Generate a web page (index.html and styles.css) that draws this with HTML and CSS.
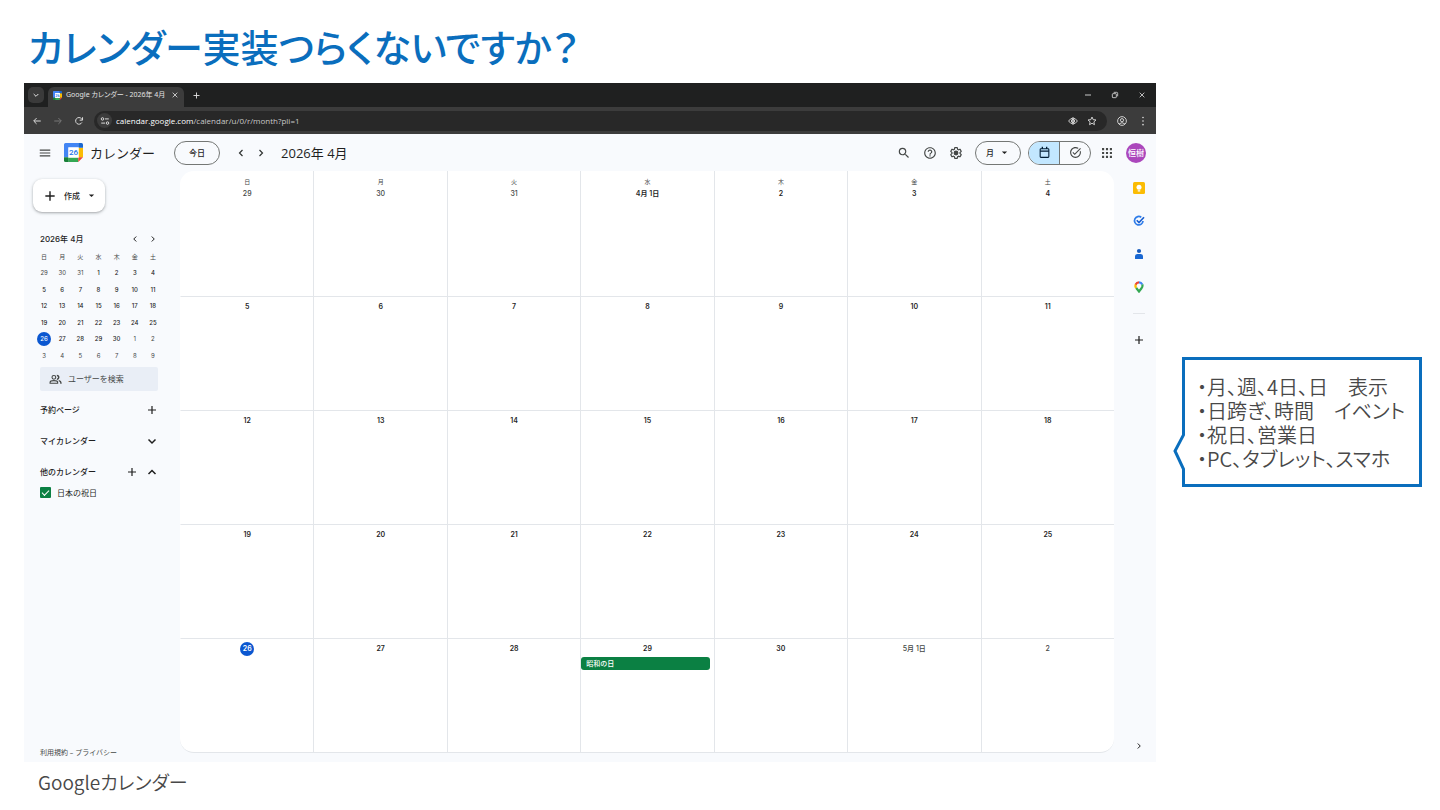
FILE: index.html
```html
<!DOCTYPE html>
<html lang="ja">
<head>
<meta charset="utf-8">
<title>カレンダー実装つらくないですか？</title>
<link rel="stylesheet" href="styles.css">
</head>
<body>
<svg class="defs" aria-hidden="true">
  <symbol id="plus" viewBox="0 0 24 24"><path d="M12 4v16M4 12h16" fill="none" stroke="currentColor" stroke-width="2.4"/></symbol>
  <symbol id="left" viewBox="0 0 24 24"><path d="M15 6l-6 6 6 6" fill="none" stroke="currentColor" stroke-width="2.4"/></symbol>
  <symbol id="right" viewBox="0 0 24 24"><path d="M9 6l6 6-6 6" fill="none" stroke="currentColor" stroke-width="2.4"/></symbol>
  <symbol id="down" viewBox="0 0 24 24"><path d="M5 9l7 7 7-7" fill="none" stroke="currentColor" stroke-width="3"/></symbol>
  <symbol id="up" viewBox="0 0 24 24"><path d="M5 16l7-7 7 7" fill="none" stroke="currentColor" stroke-width="3"/></symbol>
  <symbol id="caret" viewBox="0 0 24 24"><path d="M5 9l7 7 7-7z" fill="currentColor"/></symbol>
  <symbol id="close" viewBox="0 0 24 24"><path d="M5 5l14 14M19 5L5 19" fill="none" stroke="currentColor" stroke-width="2.4"/></symbol>
  <symbol id="gcal" viewBox="0 0 20 20">
    <path d="M1.600 0H15v5H5v10H0V1.600A1.600 1.600 0 0 1 1.600 0z" fill="#4285f4"/>
    <path d="M0 15h5v5H1.600A1.600 1.600 0 0 1 0 18.400z" fill="#188038"/>
    <path d="M5 15h10v5H5z" fill="#34a853"/>
    <path d="M15 5h5v10h-5z" fill="#fbbc04"/>
    <path d="M15 0h3.400A1.600 1.600 0 0 1 20 1.600V5h-5z" fill="#1967d2"/>
    <path d="M15 15h5l-5 5z" fill="#ea4335"/>
    <path d="M4.500 4.500h11v11h-11z" fill="#fff"/>
  </symbol>
</svg>

<main class="slide">
  <h1 class="slide-title">カレンダー実装つらくないですか？</h1>
  <div class="slide-body">
    <figure class="shot">
      <div class="window">
        <div class="tabstrip">
          <button class="tab-search" aria-label="タブを検索"><svg class="i8"><use href="#down"/></svg></button>
          <div class="tab">
            <span class="favicon"><svg viewBox="0 0 20 20"><use href="#gcal"/></svg><span class="fav-day">26</span></span>
            <span class="tab-name">Google カレンダー - 2026年 4月</span>
            <button class="plain" aria-label="タブを閉じる"><svg class="i8"><use href="#close"/></svg></button>
          </div>
          <button class="plain tab-new" aria-label="新しいタブ"><svg class="i9"><use href="#plus"/></svg></button>
          <div class="win-buttons">
            <button class="plain" aria-label="最小化"><svg class="i8" viewBox="0 0 24 24"><path d="M3 12h18" stroke="currentColor" stroke-width="2.6"/></svg></button>
            <button class="plain" aria-label="元に戻す"><svg class="i8" viewBox="0 0 24 24" fill="none" stroke="currentColor" stroke-width="2.4"><rect x="4" y="8" width="12" height="12" rx="2"/><path d="M8 4h9q3 0 3 3v9"/></svg></button>
            <button class="plain" aria-label="閉じる"><svg class="i8"><use href="#close"/></svg></button>
          </div>
        </div>
        <div class="toolbar">
          <button class="plain" aria-label="戻る"><svg class="i10" viewBox="0 0 24 24" fill="none" stroke="currentColor" stroke-width="2.4"><path d="M21 12H5M11 5l-7 7 7 7"/></svg></button>
          <button class="plain dim" aria-label="進む"><svg class="i10" viewBox="0 0 24 24" fill="none" stroke="currentColor" stroke-width="2.2"><path d="M3 12h16M13 5l7 7-7 7"/></svg></button>
          <button class="plain" aria-label="再読み込み"><svg class="i10" viewBox="0 0 24 24" fill="none" stroke="currentColor" stroke-width="2.4"><path d="M19 15.500A8 8 0 1 1 18 6.500L20 9"/><path d="M20.500 3v7h-7"/></svg></button>
          <div class="omnibox">
            <button class="plain site-info" aria-label="サイト情報"><svg class="i10" viewBox="0 0 24 24" fill="none" stroke="currentColor" stroke-width="2.4"><circle cx="6" cy="7" r="3"/><path d="M12 7h9M3 17h9"/><circle cx="18" cy="17" r="3"/></svg></button>
            <label class="url"><span class="url-host">calendar.google.com</span><input class="url-path" aria-label="アドレス" value="/calendar/u/0/r/month?pli=1"></label>
            <button class="plain" aria-label="表示"><svg class="i10" viewBox="0 0 24 24" fill="none" stroke="currentColor" stroke-width="2.2"><path d="M1.500 12Q6 5 12 5t10.500 7Q18 19 12 19T1.500 12z"/><circle cx="12" cy="12" r="4"/><path d="M12 3v18M8 12h8"/></svg></button>
            <button class="plain" aria-label="ブックマーク"><svg class="i10" viewBox="0 0 24 24" fill="none" stroke="currentColor" stroke-width="2.2"><path d="M12 2.500l2.800 6.300 6.800.7-5.100 4.600 1.400 6.700-5.900-3.400-5.900 3.400 1.400-6.700-5.100-4.600 6.800-.7z"/></svg></button>
          </div>
          <button class="plain" aria-label="プロフィール"><svg class="i10" viewBox="0 0 24 24" fill="none" stroke="currentColor" stroke-width="2.2"><circle cx="12" cy="12" r="10.500"/><circle cx="12" cy="10" r="3.800"/><path d="M5 19q7-6 14 0"/></svg></button>
          <button class="plain" aria-label="メニュー"><svg class="i10" viewBox="0 0 24 24" fill="currentColor"><circle cx="12" cy="3.500" r="2"/><circle cx="12" cy="12" r="2"/><circle cx="12" cy="20.500" r="2"/></svg></button>
        </div>

        <div class="app">
          <header class="app-head">
            <button class="plain" aria-label="メインメニュー"><svg class="i15" viewBox="0 0 24 24" fill="#444746"><path d="M3 18h18v-2H3v2zm0-5h18v-2H3v2zm0-7v2h18V6H3z"/></svg></button>
            <span class="logo"><svg viewBox="0 0 20 20"><use href="#gcal"/></svg><span class="logo-day">26</span></span>
            <span class="brand">カレンダー</span>
            <button class="pill today">今日</button>
            <div class="pager">
              <button class="plain" aria-label="前の月"><svg class="i12"><use href="#left"/></svg></button>
              <button class="plain" aria-label="次の月"><svg class="i12"><use href="#right"/></svg></button>
            </div>
            <h2 class="month">2026年 4月</h2>
            <div class="tools">
              <button class="plain" aria-label="検索"><svg class="i15" viewBox="0 0 24 24" fill="currentColor"><path d="M15.500 14h-.79l-.28-.27A6.471 6.471 0 0 0 16 9.500 6.500 6.500 0 1 0 9.500 16c1.610 0 3.090-.59 4.230-1.570l.27.28v.79l5 4.990L20.490 19l-4.990-5zm-6 0C7.010 14 5 11.990 5 9.500S7.010 5 9.500 5 14 7.010 14 9.500 11.990 14 9.500 14z"/></svg></button>
              <button class="plain" aria-label="ヘルプ"><svg class="i15" viewBox="0 0 24 24" fill="currentColor"><path d="M11 18h2v-2h-2v2zm1-16C6.480 2 2 6.480 2 12s4.480 10 10 10 10-4.480 10-10S17.520 2 12 2zm0 18c-4.410 0-8-3.590-8-8s3.590-8 8-8 8 3.590 8 8-3.590 8-8 8zm0-14c-2.210 0-4 1.790-4 4h2c0-1.100.9-2 2-2s2 .9 2 2c0 2-3 1.750-3 5h2c0-2.250 3-2.500 3-5 0-2.210-1.790-4-4-4z"/></svg></button>
              <button class="plain" aria-label="設定"><svg class="i15" viewBox="0 0 24 24" fill="currentColor"><path d="M13.850 22.250h-3.700c-.74 0-1.360-.54-1.450-1.270l-.27-1.890c-.27-.14-.53-.29-.79-.46l-1.800.72c-.7.26-1.470-.03-1.810-.65L2.200 15.530c-.35-.66-.2-1.440.36-1.880l1.530-1.190c-.01-.15-.02-.3-.02-.46 0-.15.01-.31.02-.46l-1.520-1.190c-.59-.45-.74-1.260-.37-1.880l1.850-3.190c.34-.62 1.110-.9 1.790-.63l1.810.73c.26-.17.52-.32.78-.46l.27-1.910c.09-.7.71-1.250 1.440-1.250h3.700c.74 0 1.360.54 1.450 1.270l.27 1.890c.27.14.53.29.79.46l1.800-.72c.71-.26 1.480.03 1.820.65l1.840 3.180c.36.66.2 1.440-.36 1.880l-1.520 1.190c.01.15.02.3.02.46s-.01.31-.02.46l1.520 1.190c.56.45.72 1.230.37 1.860l-1.860 3.220c-.34.62-1.110.9-1.800.63l-1.800-.72c-.26.17-.52.32-.78.46l-.27 1.910c-.1.68-.72 1.220-1.460 1.220zm-3.230-2h2.760l.37-2.550.53-.22c.44-.18.88-.44 1.340-.78l.45-.34 2.380.96 1.380-2.400-2.030-1.580.07-.56c.03-.26.06-.51.06-.78s-.03-.53-.06-.78l-.07-.56 2.030-1.580-1.390-2.400-2.390.96-.45-.35c-.42-.32-.87-.58-1.330-.77l-.52-.22-.37-2.550h-2.760l-.37 2.550-.53.21c-.44.19-.88.44-1.340.79l-.45.33-2.380-.95-1.390 2.390 2.030 1.580-.07.56a7 7 0 0 0-.06.79c0 .26.02.53.06.78l.07.56-2.030 1.580 1.380 2.400 2.390-.96.45.35c.43.33.86.58 1.330.77l.53.22.38 2.550z"/><circle cx="12" cy="12" r="4.200"/></svg></button>
            </div>
            <div class="pill view">
              <select class="view-select" aria-label="表示形式"><option>月</option></select>
              <svg class="i9"><use href="#caret"/></svg>
            </div>
            <div class="pill toggle">
              <button class="toggle-item on" aria-label="カレンダー"><svg class="i13" viewBox="0 0 24 24" fill="none" stroke="currentColor" stroke-width="2"><rect x="4" y="5" width="16" height="16" rx="1.500"/><path d="M8 1.500v4M16 1.500v4M4 9.500h16" stroke-width="2.400"/></svg></button>
              <button class="toggle-item" aria-label="ToDo リスト"><svg class="i13" viewBox="0 0 24 24" fill="currentColor"><path d="M22 5.180L10.590 16.600l-4.240-4.240 1.410-1.410 2.830 2.830 10-10L22 5.180zm-2.210 5.040c.13.57.21 1.170.21 1.780 0 4.420-3.580 8-8 8s-8-3.580-8-8 3.580-8 8-8c1.580 0 3.040.46 4.280 1.250l1.440-1.440A9.900 9.900 0 0 0 12 2C6.480 2 2 6.480 2 12s4.480 10 10 10 10-4.480 10-10c0-1.190-.22-2.330-.6-3.390l-1.610 1.610z"/></svg></button>
            </div>
            <button class="plain apps" aria-label="Google アプリ"><svg class="i15" viewBox="0 0 24 24" fill="#444746"><path d="M3.500 3.500h3.600v3.600H3.500zM10.200 3.500h3.600v3.600h-3.600zM16.900 3.500h3.600v3.600h-3.600zM3.500 10.200h3.600v3.600H3.500zM10.200 10.200h3.600v3.600h-3.600zM16.900 10.200h3.600v3.600h-3.600zM3.500 16.900h3.600v3.600H3.500zM10.200 16.900h3.600v3.600h-3.600zM16.900 16.900h3.600v3.600h-3.600z"/></svg></button>
            <button class="avatar">恒樹</button>
          </header>

          <div class="app-body">
            <aside class="side">
              <button class="create"><svg class="i15"><use href="#plus"/></svg><span>作成</span><svg class="i9"><use href="#caret"/></svg></button>
              <div class="mini-head">
                <span>2026年 4月</span>
                <button class="plain" aria-label="前の月"><svg class="i10"><use href="#left"/></svg></button>
                <button class="plain" aria-label="次の月"><svg class="i10"><use href="#right"/></svg></button>
              </div>
              <table class="mini">
                <thead><tr><th>日</th><th>月</th><th>火</th><th>水</th><th>木</th><th>金</th><th>土</th></tr></thead>
                <tbody>
                <tr><td class="out">29</td><td class="out">30</td><td class="out">31</td><td>1</td><td>2</td><td>3</td><td>4</td></tr>
                <tr><td>5</td><td>6</td><td>7</td><td>8</td><td>9</td><td>10</td><td>11</td></tr>
                <tr><td>12</td><td>13</td><td>14</td><td>15</td><td>16</td><td>17</td><td>18</td></tr>
                <tr><td>19</td><td>20</td><td>21</td><td>22</td><td>23</td><td>24</td><td>25</td></tr>
                <tr><td><span class="now">26</span></td><td>27</td><td>28</td><td>29</td><td>30</td><td class="out">1</td><td class="out">2</td></tr>
                <tr><td class="out">3</td><td class="out">4</td><td class="out">5</td><td class="out">6</td><td class="out">7</td><td class="out">8</td><td class="out">9</td></tr>
                </tbody>
              </table>
              <label class="people">
                <svg class="i13" viewBox="0 0 24 24" fill="none" stroke="currentColor" stroke-width="2"><circle cx="9" cy="8" r="3.500"/><path d="M2 19v-1.500q0-3.500 7-3.500t7 3.500V19z"/><path d="M14.500 4.500a3.500 3.500 0 0 1 0 7M18 14q4 1 4 4v2" stroke-width="2.600"/></svg>
                <input class="people-input" placeholder="ユーザーを検索" aria-label="ユーザーを検索">
              </label>
              <nav class="lists">
                <div class="list-head"><span>予約ページ</span><button class="plain" aria-label="予約ページを追加"><svg class="i12"><use href="#plus"/></svg></button></div>
                <div class="list-head"><span>マイカレンダー</span><button class="plain" aria-label="開く"><svg class="i12"><use href="#down"/></svg></button></div>
                <div class="list-head"><span>他のカレンダー</span><button class="plain" aria-label="カレンダーを追加"><svg class="i12"><use href="#plus"/></svg></button><button class="plain" aria-label="閉じる"><svg class="i12"><use href="#up"/></svg></button></div>
                <label class="check"><input class="check-box" type="checkbox" checked><span>日本の祝日</span></label>
              </nav>
              <footer class="legal"><a href="#">利用規約</a> – <a href="#">プライバシー</a></footer>
            </aside>

            <table class="grid">
              <tbody>
              <tr>
                <td class="out"><b>日</b><span>29</span></td>
                <td class="out"><b>月</b><span>30</span></td>
                <td class="out"><b>火</b><span>31</span></td>
                <td><b>水</b><span>4月 1日</span></td>
                <td><b>木</b><span>2</span></td>
                <td><b>金</b><span>3</span></td>
                <td><b>土</b><span>4</span></td>
              </tr>
              <tr><td><span>5</span></td><td><span>6</span></td><td><span>7</span></td><td><span>8</span></td><td><span>9</span></td><td><span>10</span></td><td><span>11</span></td></tr>
              <tr><td><span>12</span></td><td><span>13</span></td><td><span>14</span></td><td><span>15</span></td><td><span>16</span></td><td><span>17</span></td><td><span>18</span></td></tr>
              <tr><td><span>19</span></td><td><span>20</span></td><td><span>21</span></td><td><span>22</span></td><td><span>23</span></td><td><span>24</span></td><td><span>25</span></td></tr>
              <tr>
                <td><span class="now">26</span></td>
                <td><span>27</span></td>
                <td><span>28</span></td>
                <td><span>29</span><button class="event">昭和の日</button></td>
                <td><span>30</span></td>
                <td class="out"><span>5月 1日</span></td>
                <td class="out"><span>2</span></td>
              </tr>
              </tbody>
            </table>

            <aside class="rail">
              <button class="plain" aria-label="Keep"><svg class="i12" viewBox="0 0 24 24"><rect width="24" height="24" rx="3" fill="#fbbc04"/><circle cx="12" cy="10.500" r="5" fill="#fff"/><path d="M9.500 16.500h5v2.500h-5z" fill="#fff"/></svg></button>
              <button class="plain" aria-label="ToDo リスト"><svg class="i12" viewBox="0 0 24 24" fill="none"><path d="M16.500 4.500A8.500 8.500 0 1 0 20 12" stroke="#2f7de9" stroke-width="3.400"/><path d="M7.500 10.500l4.500 4.500L22 4.500" stroke="#1a5fd0" stroke-width="3.400"/></svg></button>
              <button class="plain" aria-label="連絡先"><svg class="i12" viewBox="0 0 24 24"><circle cx="12" cy="6" r="4.200" fill="#185abc"/><path d="M4 21v-4q0-5 5-5h6q5 0 5 5v4q0 1-1 1H5q-1 0-1-1z" fill="#1967d2"/></svg></button>
              <button class="plain" aria-label="マップ"><svg class="i12" viewBox="0 0 24 24" fill="none" stroke-width="4.400"><path d="M6.500 14A7 7 0 0 1 6 6" stroke="#fbbc04"/><path d="M5.500 7A7.200 7.200 0 0 1 12 2.800" stroke="#ea4335"/><path d="M12 2.800a7.200 7.200 0 0 1 6.500 4.200" stroke="#4285f4"/><path d="M18.500 7q1.500 4-1.500 7.500L12 21l-5.500-7" stroke="#34a853"/></svg></button>
              <hr class="rail-line">
              <button class="plain" aria-label="アドオンを取得"><svg class="i12"><use href="#plus"/></svg></button>
              <button class="plain rail-hide" aria-label="サイドパネルを非表示"><svg class="i10"><use href="#right"/></svg></button>
            </aside>
          </div>
        </div>
      </div>
      <figcaption class="caption">Googleカレンダー</figcaption>
    </figure>

    <aside class="callout">
      <svg class="callout-tip" viewBox="0 0 12 38"><path d="M12 0L3 18l9 20z" fill="#fff"/><path d="M10.500 0v2L2 18l8.500 18v2" fill="none" stroke="#0a6ebd" stroke-width="3"/></svg>
      <ul class="points">
        <li>・月、週、4日、日　表示</li>
        <li>・日跨ぎ、時間　イベント</li>
        <li>・祝日、営業日</li>
        <li>・PC、タブレット、スマホ</li>
      </ul>
    </aside>
  </div>
</main>
</body>
</html>
```
FILE: styles.css
```css
* { box-sizing: border-box; }

body {
  margin: 0;
  background: #fff;
  color: #1f1f1f;
  font-family: "Open Sans", "Noto Sans CJK JP", sans-serif;
}

button, input, select {
  font: inherit;
  color: inherit;
  border: 0;
  padding: 0;
  margin: 0;
  background: none;
}

table { border-collapse: collapse; table-layout: fixed; }
th, td { padding: 0; }
a { color: inherit; text-decoration: none; }
svg { display: block; flex: none; }

.defs { position: absolute; width: 0; height: 0; }

.i8 { width: 8px; height: 8px; }
.i9 { width: 9px; height: 9px; }
.i10 { width: 10px; height: 10px; }
.i12 { width: 12px; height: 12px; }
.i13 { width: 13px; height: 13px; }
.i15 { width: 14px; height: 14px; }

.plain { display: flex; align-items: center; justify-content: center; flex: none; }

/* Slide */
.slide { padding: 19px 18px 0 24px; }
.slide-title {
  margin: 0 0 10px;
  padding-left: 4px;
  font: 500 38px/54px "Noto Sans CJK JP", sans-serif;
  font-feature-settings: "palt";
  color: #0a6ebd;
}
.slide-body {
  display: grid;
  grid-template-columns: minmax(0, 1fr) 240px;
  gap: 26px;
  align-items: start;
}
.shot { margin: 0; }
.caption {
  padding: 6px 14px 0;
  font: 350 19px/28px "Noto Sans CJK JP", sans-serif;
  font-feature-settings: "palt";
  color: #484848;
}

/* Callout */
.callout {
  position: relative;
  margin-top: 274px;
  padding: 15px 12px 13px;
  border: 3px solid #0a6ebd;
  background: #fff;
}
.callout-tip { position: absolute; left: -12px; top: 73px; width: 12px; height: 38px; }
.points {
  list-style: none;
  margin: 0;
  padding: 0;
  font: 350 20px/24px "Noto Sans CJK JP", sans-serif;
  font-feature-settings: "palt";
  color: #484848;
  white-space: nowrap;
}

/* Browser chrome */
.window { font-size: 8px; line-height: 12px; }
.tabstrip {
  display: flex;
  align-items: center;
  height: 24px;
  padding: 0 1px 0 4px;
  background: #1f2020;
  color: #e3e3e3;
}
.tab-search {
  display: flex;
  align-items: center;
  justify-content: center;
  width: 16px;
  height: 16px;
  border-radius: 5px;
  background: #3a3a3a;
}
.tab {
  display: flex;
  align-items: center;
  align-self: flex-end;
  gap: 4px;
  width: 136px;
  height: 20px;
  margin-left: 4px;
  padding: 0 5px 4px;
  border-radius: 6px 6px 0 0;
  background: #3c3c3c;
}
.favicon, .logo { display: grid; place-items: center; flex: none; color: #1a73e8; font-family: Roboto, sans-serif; font-weight: 500; }
.favicon svg, .favicon span, .logo svg, .logo span { grid-area: 1 / 1; }
.favicon svg { width: 9px; height: 9px; }
.fav-day { font-size: 4px; line-height: 5px; }
.tab-name {
  flex: 1;
  font-family: "Noto Sans", "Noto Sans CJK JP", sans-serif;
  font-size: 7px;
  font-feature-settings: "palt";
  white-space: nowrap;
}
.tab-new { width: 24px; }
.win-buttons { display: flex; margin-left: auto; }
.win-buttons .plain { width: 27px; height: 24px; }

.toolbar {
  display: flex;
  align-items: center;
  height: 27px;
  padding: 0 3px 0 2px;
  background: #3c3c3c;
  color: #dcdcdc;
}
.toolbar .plain { width: 21px; height: 20px; }
.toolbar .dim { color: #7d7d7d; }
.omnibox {
  display: flex;
  align-items: center;
  flex: 1;
  height: 20px;
  margin: 0 4px 0 5px;
  padding: 0 6px 0 3px;
  border-radius: 10px;
  background: #282828;
}
.toolbar .omnibox .plain { width: 19px; }
.toolbar .omnibox .site-info { width: 15px; height: 15px; border-radius: 50%; background: #3c3c3c; }
.url { display: flex; flex: 1; margin-left: 4px; font-size: 8px; }
.url-host { color: #fff; }
.url-path { flex: 1; min-width: 0; color: #c7c7c7; }

/* Calendar header */
.app { background: #f8fafd; }
.app-head {
  display: flex;
  align-items: center;
  height: 37px;
  padding: 0 10px 0 9px;
  color: #1f1f1f;
}
.app-head .plain { width: 24px; height: 24px; }
.logo { margin-left: 7px; }
.logo svg { width: 19px; height: 19px; }
.logo-day { font-size: 8px; line-height: 10px; }
.brand { margin-left: 7px; font-size: 13px; line-height: 20px; }
.pill {
  display: flex;
  align-items: center;
  height: 24px;
  border: 1px solid #747775;
  border-radius: 12px;
}
.today { justify-content: center; width: 46px; margin-left: 19px; font-size: 8px; font-weight: 500; }
.pager { display: flex; margin: 0 10px 0 11px; color: #303331; }
.app-head .pager .plain { width: 20px; }
.month { margin: 0; font-size: 13px; line-height: 20px; font-weight: 400; }
.tools { display: flex; margin-left: auto; color: #444746; }
.app-head .tools .plain { width: 26px; }
.view { width: 46px; margin-left: 6px; padding: 0 11px 0 10px; justify-content: space-between; }
.view-select { appearance: none; width: 12px; font-size: 8px; font-weight: 500; }
.toggle { width: 63px; margin-left: 7px; overflow: hidden; }
.toggle-item { display: flex; align-items: center; justify-content: center; flex: 1; height: 24px; color: #444746; }
.toggle-item.on { background: #c2e7ff; border-right: 1px solid #747775; color: #001d35; }
.app-head .apps { width: 26px; margin-left: 3px; }
.avatar {
  width: 20px;
  height: 20px;
  margin-left: 6px;
  border-radius: 50%;
  background: #ab47bc;
  color: #fff;
  font-size: 8px;
  font-weight: 500;
  line-height: 20px;
  white-space: nowrap;
}

.app-body { display: grid; grid-template-columns: 156px minmax(0, 1fr) 42px; }

/* Sidebar */
.side { display: flex; flex-direction: column; padding: 8px 22px 4px 16px; }
.create {
  display: flex;
  align-items: center;
  align-self: flex-start;
  gap: 7px;
  height: 33px;
  margin-left: -7px;
  padding: 0 9px 0 10px;
  border-radius: 9px;
  background: #fff;
  box-shadow: 0 1px 2px rgba(60, 64, 67, .3), 0 1px 3px 1px rgba(60, 64, 67, .12);
  font-size: 8px;
  font-weight: 500;
}
.mini-head { display: flex; align-items: center; height: 20px; margin-top: 17px; font: 500 8px/12px Inter, "Noto Sans CJK JP", sans-serif; }
.mini-head span { flex: 1; }
.mini-head .plain { width: 18px; height: 18px; }
.mini-head .plain:last-child { margin-right: -4px; }
.mini {
  width: calc(100% + 9px);
  height: 115px;
  margin: 0 -4px 3px -5px;
  font: 500 6px/8px Inter, "Noto Sans CJK JP", sans-serif;
  text-align: center;
}
.mini tr { height: 16px; }
.mini th { font-weight: 400; color: #444746; }
.mini .out { font-weight: 400; color: #444746; }
.mini .now { display: block; width: 14px; margin: 0 auto; line-height: 14px; }
.now { border-radius: 50%; background: #0b57d0; color: #fff; }

.people {
  display: flex;
  align-items: center;
  gap: 6px;
  height: 24px;
  padding: 0 9px;
  border-radius: 2px;
  background: #e9eef6;
  color: #444746;
}
.people-input { flex: 1; min-width: 0; font-size: 8px; }
.people-input::placeholder { color: #444746; opacity: 1; }

.lists { margin-top: 3px; font-size: 8px; font-weight: 500; }
.list-head { display: flex; align-items: center; height: 31px; }
.list-head span { flex: 1; }
.list-head .plain { width: 20px; margin-right: -4px; }
.list-head .plain + .plain { margin-left: 4px; }
.check { display: flex; align-items: center; gap: 6px; height: 11px; font-weight: 400; }
.check-box {
  appearance: none;
  position: relative;
  width: 11px;
  height: 11px;
  border-radius: 1px;
  background: #0b8043;
}
.check-box::before {
  content: "";
  position: absolute;
  inset: 3px 2px 4px;
  border: solid #fff;
  border-width: 0 0 1px 1px;
  transform: rotate(-45deg);
}
.legal { margin-top: auto; font-size: 7px; line-height: 10px; color: #444746; }

/* Month grid */
.grid {
  width: 100%;
  height: 581px;
  border-collapse: separate;
  border-spacing: 0;
  border-bottom: 1px solid #e3e6ea;
  border-radius: 14px;
  background: #fff;
  font: 600 7px/10px Inter, "Noto Sans CJK JP", sans-serif;
  text-align: center;
}
.grid tr { height: 114px; }
.grid tr:first-child { height: 125px; }
.grid td { padding-top: 5px; vertical-align: top; border-left: 1px solid #e3e6ea; border-top: 1px solid #e3e6ea; }
.grid td:first-child { border-left-color: transparent; }
.grid tr:first-child td { border-top: 0; }
.grid b, .grid span { display: block; }
.grid b { margin-bottom: 1px; font-weight: 400; font-size: 6px; line-height: 12px; color: #444746; }
.grid .out span { font-weight: 500; color: #444746; }
.grid .now { width: 14px; margin: -2px auto 0; line-height: 14px; color: #fff; }
.event {
  display: block;
  width: calc(100% - 4px);
  height: 13px;
  margin-top: 3px;
  padding: 0 5px;
  border-radius: 3px;
  background: #0b8043;
  color: #fff;
  font-size: 7px;
  font-weight: 500;
  line-height: 13px;
  text-align: left;
}

/* Right rail */
.rail { display: flex; flex-direction: column; padding: 0 0 0 8px; min-height: 591px; }
.rail .plain { height: 33px; }
.rail-line { width: 12px; height: 1px; margin: 10px auto 9px; border: 0; background: #e3e6ea; }
.rail .rail-hide { margin-top: auto; }
```
